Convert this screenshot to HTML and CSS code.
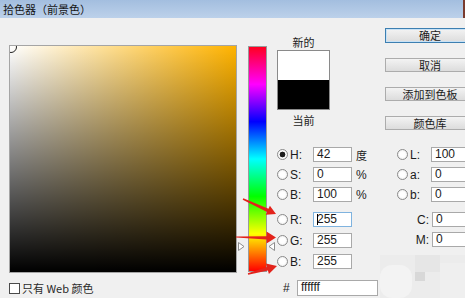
FILE: index.html
```html
<!DOCTYPE html>
<html lang="zh-CN">
<head>
    <meta charset="UTF-8">
    <title>拾色器（前景色）</title>
    <link rel="stylesheet" href="styles.css">
</head>
<body>
<div class="titlebar">
    <span>拾色器（前景色）</span>
    <i class="close"></i>
</div>
<div class="dialog">
    <div class="left">
        <div class="field"><span class="marker"></span></div>
        <div class="web"><span class="check"></span>只有 Web 颜色</div>
    </div>

    <div class="hue">
        <div class="hue-bar"></div>
        <svg class="ptr ptr-l" width="7" height="9" viewBox="0 0 7 9"><path d="M0.5 0.5 L6 4.5 L0.5 8.5 Z" fill="#fff" stroke="#8c8c8c"/></svg>
        <svg class="ptr ptr-r" width="7" height="9" viewBox="0 0 7 9"><path d="M6.5 0.5 L1 4.5 L6.5 8.5 Z" fill="#fff" stroke="#8c8c8c"/></svg>
    </div>

    <div class="right">
        <div class="top">
            <div class="preview">
                <div class="cap">新的</div>
                <div class="swatch">
                    <div class="new"></div>
                    <div class="cur"></div>
                </div>
                <div class="cap cap-b">当前</div>
            </div>
            <div class="buttons">
                <div class="btn default">确定</div>
                <div class="btn">取消</div>
                <div class="btn">添加到色板</div>
                <div class="btn">颜色库</div>
            </div>
        </div>

        <div class="fields">
            <div class="col col-hsb">
                <div class="row"><span class="radio on"></span><span class="lbl">H:</span><span class="inp">42</span><span class="unit cjk">度</span></div>
                <div class="row"><span class="radio"></span><span class="lbl">S:</span><span class="inp">0</span><span class="unit">%</span></div>
                <div class="row"><span class="radio"></span><span class="lbl">B:</span><span class="inp">100</span><span class="unit">%</span></div>
                <div class="row gap"><span class="radio"></span><span class="lbl">R:</span><span class="inp focus"><i class="caret"></i>255</span></div>
                <div class="row rgb"><span class="radio"></span><span class="lbl">G:</span><span class="inp">255</span></div>
                <div class="row rgb"><span class="radio"></span><span class="lbl">B:</span><span class="inp">255</span></div>
                <div class="row hex"><span class="hash">#</span><span class="inp wide">ffffff</span></div>
            </div>
            <div class="col col-lab">
                <div class="row"><span class="radio"></span><span class="lbl">L:</span><span class="inp">100</span></div>
                <div class="row"><span class="radio"></span><span class="lbl">a:</span><span class="inp">0</span></div>
                <div class="row"><span class="radio"></span><span class="lbl">b:</span><span class="inp">0</span></div>
                <div class="row gap"><span class="lbl-r">C:</span><span class="inp">0</span></div>
                <div class="row"><span class="lbl-r">M:</span><span class="inp">0</span></div>
            </div>
        </div>
    </div>
</div>

<!-- red annotation arrows drawn over the dialog -->
<svg class="arrows" width="465" height="298" viewBox="0 0 465 298">
    <polygon fill="#e3231b" points="243.3,198.3 268.5,208.7 269.9,205.7 276,214 265.7,214.8 267.1,211.9 242.7,199.7"/>
    <polygon fill="#e3231b" points="236,236.4 266.5,236.2 266.5,231.5 276,237.5 266.5,243.5 266.5,239.6 236,237.6"/>
    <polygon fill="#e3231b" points="247.8,273.2 266.9,267 265.9,263.4 277,266 268.9,274 267.9,270.4 248.2,274.8"/>
</svg>

<!-- blurred patch in the lower right corner -->
<div class="mosaic">
    <span class="m1"></span>
    <span class="m2"></span>
    <span class="m3"></span>
    <span class="m4"></span>
</div>
</body>
</html>
```

FILE: styles.css
```css
body {
    margin: 0;
    width: 465px;
    height: 298px;
    overflow: hidden;
    position: relative;
    background-color: #f0f0f0;
    color: #1b1b1b;
    font-family: "Noto Sans CJK SC", sans-serif;
    font-size: 11px;
    line-height: 14px;
}

.titlebar {
    height: 18px;
    display: flex;
    align-items: center;
    padding-left: 3px;
    background: linear-gradient(#a3bedf, #bcd1ea);
    color: #151515;
    font-size: 11px;
}
.close {
    margin-left: auto;
    width: 2px;
    height: 18px;
    background-color: #7a3b2e;
}

.dialog {
    display: flex;
    align-items: flex-start;
    padding-left: 9px;
}

/* colour field */
.left { margin-top: 27px; }
.field {
    position: relative;
    overflow: hidden;
    width: 226px;
    height: 226px;
    border: 1px solid #a5a5a5;
    background:
        linear-gradient(to top, #000, rgba(0,0,0,0)),
        linear-gradient(to right, #fff, #ffb300);
}
.marker {
    position: absolute;
    left: -5px;
    top: -5px;
    width: 10px;
    height: 10px;
    border: 1px solid #222;
    border-radius: 50%;
}
.web {
    display: flex;
    align-items: center;
    margin-top: 8px;
    gap: 2px;
    color: #2a2a2a;
}
.check {
    width: 11px;
    height: 11px;
    box-sizing: border-box;
    border: 1px solid #4a4a4a;
    background-color: #fff;
}

/* hue slider */
.hue {
    position: relative;
    margin-left: 11px;
    margin-top: 28px;
}
.hue-bar {
    width: 17px;
    height: 224px;
    border: 1px solid #9a9a9a;
    background: linear-gradient(#ff0020 0%, #ff00ff 16.67%, #0000ff 33.33%, #00ffff 50%, #00ff00 66.67%, #ffff00 83.33%, #ff0000 100%);
}
.ptr { position: absolute; top: 196px; }
.ptr-l { left: -10px; }
.ptr-r { left: 20px; }

/* right side */
.right {
    margin-left: 10px;
    margin-top: 10px;
}
.top {
    display: flex;
    height: 119px;
}
.preview { width: 53px; }
.cap {
    text-align: center;
    margin-top: 7px;
}
.cap-b { margin-top: 3px; }
.swatch {
    margin-top: 1px;
    border: 1px solid #8a8a8a;
}
.new { height: 29px; background-color: #fff; }
.cur { height: 29px; background-color: #000; }

.buttons {
    display: flex;
    flex-direction: column;
    gap: 15px;
    margin-left: 55px;
}
.btn {
    width: 90px;
    height: 14px;
    box-sizing: border-box;
    border: 1px solid #acacac;
    background: linear-gradient(#f3f3f3, #dcdcdc);
    text-align: center;
    line-height: 12px;
}
.btn.default {
    height: 15px;
    border-color: #3c7fb1;
    box-shadow: inset 0 0 0 1px #c8e2f6;
}

/* value fields */
.fields { display: flex; }
.col-hsb { width: 120px; }
.row {
    display: flex;
    align-items: center;
    height: 15px;
    margin-top: 5px;
}
.row:first-child { margin-top: 0; }
.row.gap { margin-top: 10px; }
.row.rgb { margin-top: 6px; }
.row.hex { margin-top: 11px; height: 16px; }

.radio {
    width: 11px;
    height: 11px;
    box-sizing: border-box;
    border: 1px solid #8b8b8b;
    border-radius: 50%;
    background: radial-gradient(circle, #ffffff 40%, #e4e4e4 100%);
}
.radio.on {
    background: radial-gradient(circle, #1a1a1a 0 2.6px, #ffffff 3.2px, #e4e4e4 100%);
}
.lbl, .lbl-r, .inp, .unit, .hash {
    font-family: "Liberation Sans", Arial, sans-serif;
    font-size: 12px;
}
.lbl {
    width: 23px;
    margin-left: 2px;
}
.col-lab .lbl { width: 21px; }
.lbl-r {
    width: 35px;
    box-sizing: border-box;
    padding-right: 3px;
    text-align: right;
}
.inp {
    position: relative;
    width: 39px;
    height: 15px;
    box-sizing: border-box;
    border: 1px solid #a9a9a9;
    background-color: #fff;
    padding-left: 3px;
    line-height: 13px;
}
.col-lab .inp { width: 40px; }
.inp.focus { border-color: #7fb3df; }
.inp.wide { width: 81px; height: 16px; }
.caret {
    position: absolute;
    left: 3px;
    top: 1px;
    width: 1px;
    height: 11px;
    background-color: #000;
}
.unit { margin-left: 4px; }
.unit.cjk {
    font-family: "Noto Sans CJK SC", sans-serif;
    font-size: 11px;
}
.hash {
    width: 14px;
    margin-left: 6px;
}

.arrows {
    position: absolute;
    left: 0;
    top: 0;
    pointer-events: none;
}

.mosaic {
    position: absolute;
    left: 380px;
    top: 255px;
    width: 85px;
    height: 43px;
    background-color: #ececec;
}
.mosaic span { position: absolute; }
.m1 { left: 0; top: 10px; width: 32px; height: 33px; border-radius: 12px; background-color: #f3f3f3; }
.m2 { left: 35px; top: 17px; width: 10px; height: 9px; background-color: #d8d8d8; }
.m3 { left: 35px; top: 0; width: 25px; height: 17px; background-color: #e6e6e6; }
.m4 { left: 60px; top: 8px; width: 25px; height: 35px; background-color: #efefef; }
```
